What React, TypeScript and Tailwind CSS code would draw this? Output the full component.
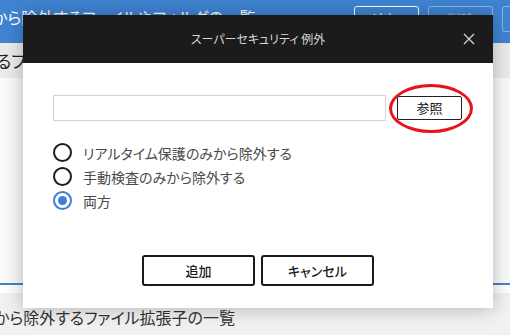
import React, { useState } from "react";

const font = {
  fontFamily: '"Noto Sans CJK JP", "Noto Sans", sans-serif',
};

type Scope = "realtime" | "manual" | "both";

const options: { value: Scope; label: string }[] = [
  { value: "realtime", label: "リアルタイム保護のみから除外する" },
  { value: "manual", label: "手動検査のみから除外する" },
  { value: "both", label: "両方" },
];

const Radio: React.FC<{ checked: boolean }> = ({ checked }) =>
  checked ? (
    <span className="flex items-center justify-center size-[19px] rounded-full border-2 border-[#3b7fd6]">
      <span className="size-[9px] rounded-full bg-[#3b7fd6]" />
    </span>
  ) : (
    <span className="size-[19px] rounded-full border-2 border-[#1e1e1e]" />
  );

const ExceptionDialog: React.FC = () => {
  const [scope, setScope] = useState<Scope>("both");

  return (
    <div className="absolute left-[23px] top-[15px] w-[470px] h-[293px] bg-white shadow-[0_0_18px_rgba(0,0,0,0.28)] flex flex-col">
      <div className="relative h-[48px] bg-[#1b1b1b] flex items-center justify-center">
        <span className="text-[12px] text-[#d6d6d6] [font-feature-settings:'palt']">
          スーパーセキュリティ 例外
        </span>
        <button className="absolute right-[17px] top-[17px] size-[14px] text-[#cfcfcf]">
          <svg viewBox="0 0 14 14" className="size-[14px]">
            <path d="M2 2 L12 12 M12 2 L2 12" stroke="currentColor" strokeWidth="1.4" />
          </svg>
        </button>
      </div>

      <div className="flex flex-col px-[30px] pt-[32px]">
        <div className="flex items-center">
          <input
            className="w-[333px] h-[26px] border border-[#d4d4d4] outline-none px-2 text-[13px]"
            type="text"
          />
          <div className="relative ml-[11px]">
            <button className="w-[65px] h-[24px] border border-[#222] rounded-[2px] text-[13px] text-[#111] flex items-center justify-center">
              参照
            </button>
            {/* red annotation ring */}
            <span className="absolute left-[-8px] top-[-12px] w-[84px] h-[49px] rounded-[50%] border-[3px] border-[#e8141b] pointer-events-none" />
          </div>
        </div>

        <div className="flex flex-col gap-[5px] mt-[22px]">
          {options.map((o) => (
            <label
              key={o.value}
              className="flex items-center h-[19px] cursor-pointer"
              onClick={() => setScope(o.value)}
            >
              <Radio checked={scope === o.value} />
              <span className="ml-[11px] text-[14px] text-[#4a4a4a] leading-none [font-feature-settings:'palt']">
                {o.label}
              </span>
            </label>
          ))}
        </div>

        <div className="flex justify-center gap-[6px] mt-[45px]">
          <button className="w-[113px] h-[31px] border-2 border-[#1a1a1a] rounded-[3px] text-[13px] font-medium text-[#1a1a1a]">
            追加
          </button>
          <button className="w-[113px] h-[31px] border-2 border-[#1a1a1a] rounded-[3px] text-[13px] font-medium text-[#1a1a1a] [font-feature-settings:'palt']">
            キャンセル
          </button>
        </div>
      </div>
    </div>
  );
};

export default function App() {
  return (
    <div className="relative w-[510px] h-[335px] overflow-hidden bg-[#fafafa]" style={font}>
      <div className="h-[43px] bg-[#3f84d3] flex items-start overflow-hidden">
        <span className="ml-[-8px] mt-[9px] text-[16px] text-white whitespace-nowrap leading-none [font-feature-settings:'palt']">
          から除外するファイルやフォルダの一覧
        </span>
        <div className="ml-auto flex gap-[9px] mt-[6px] mr-[-12px] shrink-0">
          <button className="w-[65px] h-[26px] border-[1.5px] border-white rounded-[3px] text-[14px] text-white">
            追加
          </button>
          <button className="w-[65px] h-[26px] border-[1.5px] border-white/40 rounded-[3px] text-[14px] text-white/50">
            削除
          </button>
          <button className="w-[20px] h-[26px] border-[1.5px] border-white/40 rounded-[3px]" />
        </div>
      </div>
      <div className="h-[35px] bg-[#ebebeb] flex items-center overflow-hidden">
        <span className="ml-[-4px] text-[17px] text-[#222] whitespace-nowrap [font-feature-settings:'palt']">
          るファイルやフォルダ
        </span>
      </div>
      <div className="h-[205px]" />
      <div className="h-[2px] bg-[#4a7fc6]" />
      <div className="h-[8px] bg-white" />
      <div className="h-[50px] bg-[#f1f1f1] pt-[12px] overflow-hidden">
        <span className="ml-[-6px] text-[16px] text-[#333] whitespace-nowrap leading-none [font-feature-settings:'palt']">
          から除外するファイル拡張子の一覧
        </span>
      </div>
      <ExceptionDialog />
    </div>
  );
}
